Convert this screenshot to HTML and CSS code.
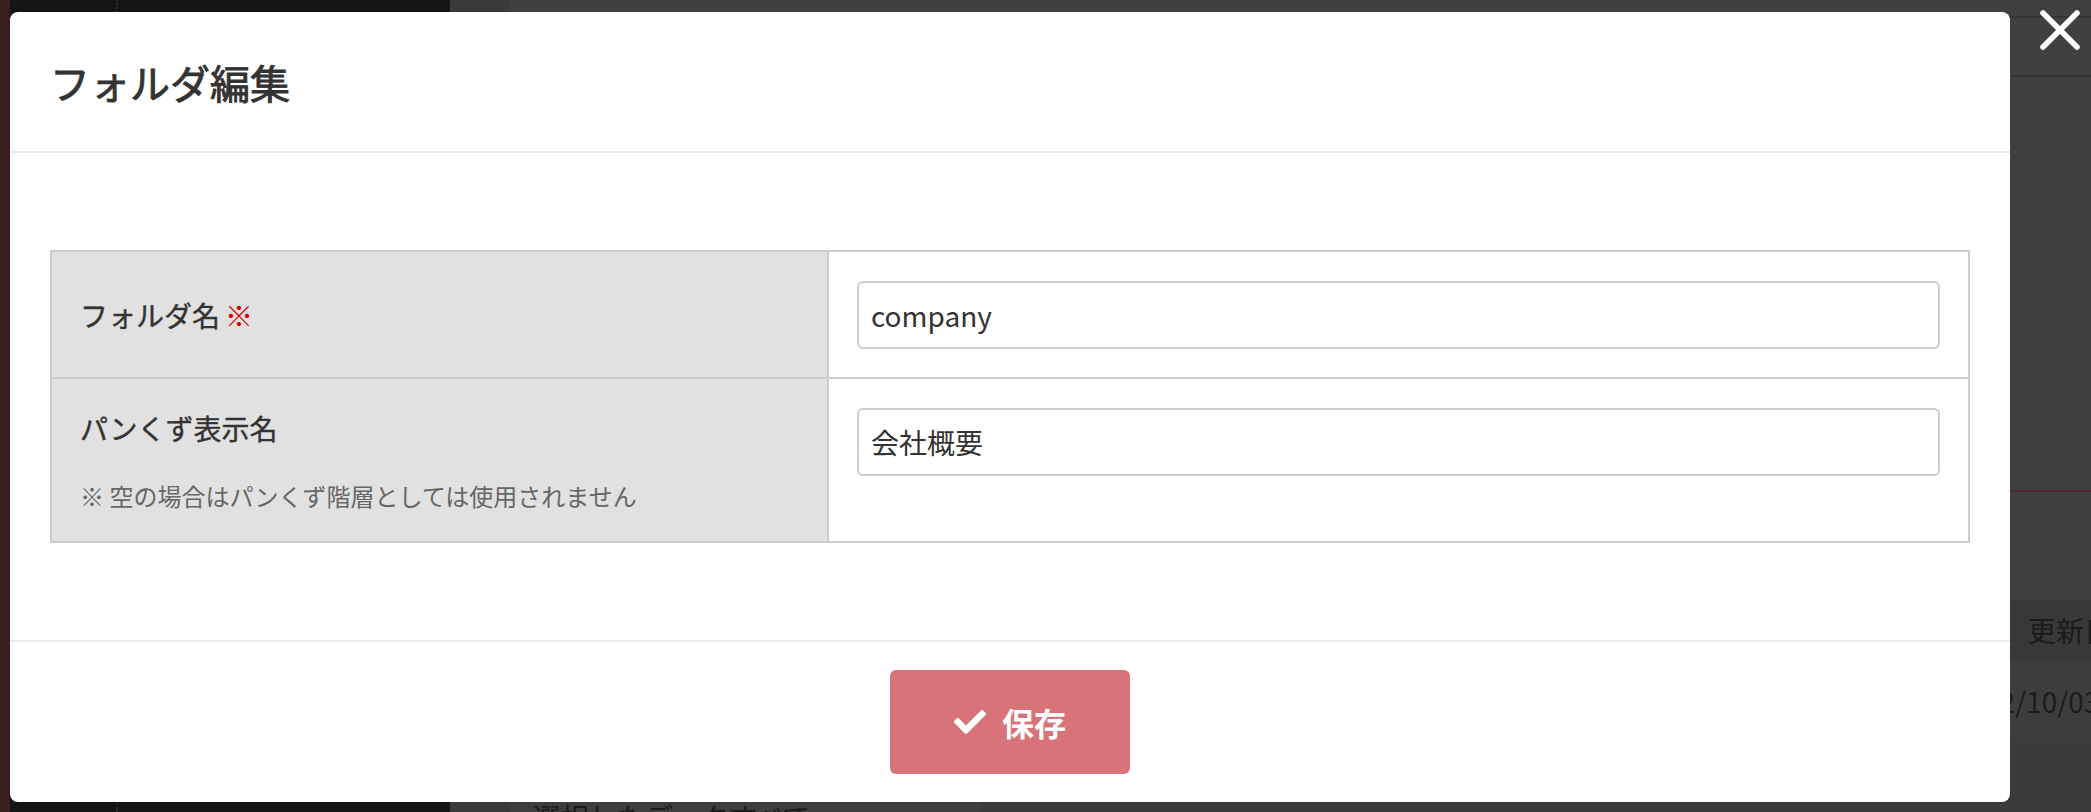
FILE: index.html
```html
<!DOCTYPE html>
<html lang="ja">
<head>
  <title>フォルダ編集</title>
  <meta charset="UTF-8">
  <meta name="viewport" content="width=device-width, initial-scale=1">
  <link rel="stylesheet" href="styles.css">
</head>
<body>
  <div class="page">
    <div class="edge"></div>
    <aside class="sidebar"><div class="sidebar-rule"></div></aside>
    <div class="gutter"></div>
    <main class="main">
      <div class="main-top"></div>
      <div class="main-bar"></div>
      <div class="main-section"></div>
      <div class="list-head"><span></span><span class="cell">更新日時</span></div>
      <div class="list-row"><span></span><span class="cell">2022/10/03 10:00</span></div>
      <div class="list-foot"><span class="bulk">選択したデータすべて</span></div>
    </main>
  </div>

  <button class="modal-close" type="button" aria-label="閉じる">
    <svg width="40" height="40" viewBox="0 0 40 40">
      <path d="M3 3L37 37M37 3L3 37" stroke="#fff" stroke-width="5.5" stroke-linecap="round" fill="none"/>
    </svg>
  </button>

  <div class="modal">
    <div class="modal-header">
      <h2 class="modal-title">フォルダ編集</h2>
    </div>

    <div class="modal-body">
      <table class="form-table">
        <tr>
          <th class="mid">フォルダ名<span class="required">※</span></th>
          <td><input type="text" class="text-input" value="company"></td>
        </tr>
        <tr>
          <th>
            <div>パンくず表示名</div>
            <div class="label-note">※ 空の場合はパンくず階層としては使用されません</div>
          </th>
          <td><input type="text" class="text-input" value="会社概要"></td>
        </tr>
      </table>
    </div>

    <div class="modal-footer">
      <button class="btn-save" type="button">
        <svg width="32" height="32" viewBox="0 0 512 512">
          <path fill="#fff" d="M173.9 439.4l-166.4-166.4c-10-10-10-26.2 0-36.2l36.2-36.2c10-10 26.2-10 36.2 0L192 312.7 432.1 72.6c10-10 26.2-10 36.2 0l36.2 36.2c10 10 10 26.2 0 36.2l-294.4 294.4c-10 10-26.2 10-36.2 0z"/>
        </svg>
        <span>保存</span>
      </button>
    </div>
  </div>
</body>
</html>
```

FILE: styles.css
```css
body {
  margin: 0;
  height: 812px;
  overflow: hidden;
  font-family: "Noto Sans CJK JP", "Noto Sans", sans-serif;
  background: #404040;
  color: #333;
}

/* dimmed page behind the dialog */
.page {
  display: flex;
  height: 812px;
}
.edge {
  flex: 0 0 10px;
  background: #3a1d1e;
}
.sidebar {
  flex: 0 0 440px;
  background: #141414;
}
.sidebar-rule {
  width: 106px;
  height: 100%;
  border-right: 2px dotted #2c2c2c;
}
.gutter {
  flex: 0 0 60px;
  background: #3a3a3a;
}
.main {
  flex: 1;
  min-width: 0;
  overflow: hidden;
  display: flex;
  flex-direction: column;
  background: #404040;
  color: #1b1b1b;
  font-size: 28px;
}
.main > div {
  flex-shrink: 0;
}
.main-top {
  height: 16px;
  border-bottom: 2px solid #343434;
}
.main-bar {
  height: 57px;
  border-bottom: 2px solid #343434;
}
.main-section {
  height: 413px;
  border-bottom: 2px solid #4a2a2b;
}
.list-head {
  margin-top: 108px;
  height: 60px;
  background: #383838;
  display: grid;
  grid-template-columns: 1500px 1fr;
  align-items: center;
}
.list-head .cell {
  padding-left: 18px;
  white-space: nowrap;
}
.list-row {
  height: 82px;
  display: grid;
  grid-template-columns: 1443px 1fr;
  align-items: center;
  background: #3d3d3d;
}
.list-row .cell {
  white-space: nowrap;
}
.main > .list-foot {
  flex: 1 1 auto;
  min-height: 0;
  background: #3b3b3b;
}
.bulk {
  display: block;
  width: 471px;
  height: 100%;
  box-sizing: border-box;
  padding: 55px 0 0 23px;
  background: #3e3e3e;
  line-height: 40px;
}

/* dialog */
.modal-close {
  position: absolute;
  left: 2040px;
  top: 10px;
  width: 40px;
  height: 40px;
  padding: 0;
  border: none;
  background: none;
  cursor: pointer;
}
.modal-close svg {
  display: block;
}
.modal {
  position: absolute;
  left: 10px;
  top: 12px;
  width: 2000px;
  height: 790px;
  background: #fff;
  border-radius: 8px;
  display: flex;
  flex-direction: column;
}
.modal-header {
  height: 139px;
  padding: 0 40px;
  display: flex;
  align-items: center;
  border-bottom: 2px solid #ebebeb;
}
.modal-title {
  margin: 0;
  font-size: 40px;
  font-weight: 400;
  line-height: 60px;
  color: #333;
  -webkit-text-stroke: 0.9px #333;
}
.modal-body {
  padding: 97px 40px;
}
.form-table {
  width: 100%;
  border-collapse: collapse;
}
.form-table th,
.form-table td {
  border: 2px solid #ccc;
}
.form-table th {
  width: 719px;
  padding: 28px;
  background: #e1e1e1;
  text-align: left;
  vertical-align: top;
  font-size: 28px;
  font-weight: 400;
  line-height: 42px;
  color: #333;
  -webkit-text-stroke: 0.4px #333;
}
.form-table th.mid {
  vertical-align: middle;
}
.form-table td {
  padding: 29px 28px 28px;
  vertical-align: top;
}
.required {
  margin-left: 5px;
  color: #dd0000;
  -webkit-text-stroke: 0;
}
.label-note {
  margin-top: 30px;
  font-size: 24px;
  font-weight: 400;
  line-height: 34px;
  color: #666;
  -webkit-text-stroke: 0;
}
.text-input {
  display: block;
  width: 100%;
  height: 68px;
  box-sizing: border-box;
  padding: 0 12px;
  border: 2px solid #ccc;
  border-radius: 6px;
  font-family: inherit;
  font-size: 28px;
  color: #333;
}
.modal-footer {
  border-top: 2px solid #ebebeb;
  padding: 28px 0;
  display: flex;
  justify-content: center;
}
.btn-save {
  width: 240px;
  height: 104px;
  display: flex;
  align-items: center;
  justify-content: center;
  gap: 16px;
  padding: 0;
  border: none;
  border-radius: 6px;
  background: #d87379;
  color: #fff;
  font-family: inherit;
  font-size: 32px;
  font-weight: 700;
  cursor: pointer;
}
.btn-save svg {
  display: block;
}
```
